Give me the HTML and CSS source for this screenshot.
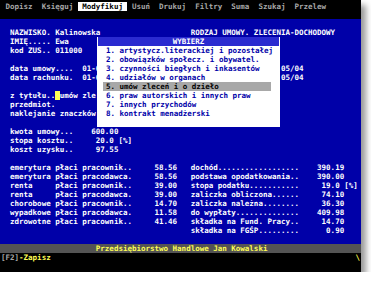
FILE: index.html
```html
<!DOCTYPE html>
<html lang="pl">
<head>
    <meta charset="UTF-8">
    <title>Umowy zlecenia</title>
    <link rel="stylesheet" href="styles.css">
</head>
<body>
    <div class="screen">
        <div class="menubar">
            <div class="row"> Dopisz  Księguj <span class="menu-active"> Modyfikuj </span> Usuń  Drukuj  Filtry  Suma  Szukaj  Przelew</div>
        </div>

        <div class="panel">
            <div class="row"></div>
            <div class="row">  NAZWISKO. Kalinowska                    RODZAJ UMOWY. ZLECENIA-DOCHODOWY</div>
            <div class="row">  IMIĘ..... Ewa</div>
            <div class="row">  kod ZUS.. 011000</div>
            <div class="row"></div>
            <div class="row"><span>  data umowy....  01-0</span><span class="month">05/04</span></div>
            <div class="row"><span>  data rachunku.  01-0</span><span class="month">05/04</span></div>
            <div class="row"></div>
            <div class="row">  z tytułu..<span class="cursor"> </span>umów zle</div>
            <div class="row">  przedmiot.</div>
            <div class="row">  naklejanie znaczków</div>
            <div class="row"></div>
            <div class="row">  kwota umowy...    600.00</div>
            <div class="row">  stopa kosztu..     20.0 [%]</div>
            <div class="row">  koszt uzysku..     97.55</div>
            <div class="row"></div>
            <div class="row">  emerytura płaci pracownik..     58.56   dochód..................    390.19</div>
            <div class="row">  emerytura płaci pracodawca.     58.56   podstawa opodatkowania..    390.00</div>
            <div class="row">  renta     płaci pracownik..     39.00   stopa podatku...........     19.0 [%]</div>
            <div class="row">  renta     płaci pracodawca.     39.00   zaliczka obliczona......     74.10</div>
            <div class="row">  chorobowe płaci pracownik..     14.70   zaliczka należna........     36.30</div>
            <div class="row">  wypadkowe płaci pracodawca.     11.58   do wypłaty..............    409.98</div>
            <div class="row">  zdrowotne płaci pracownik..     41.46   składka na Fund. Pracy..     14.70</div>
            <div class="row">                                          składka na FGŚP.........      0.90</div>
            <div class="row"></div>
        </div>

        <div class="status">
            <div class="row">                     Przedsiębiorstwo Handlowe Jan Kowalski</div>
        </div>

        <div class="keys">
            <div class="row"><span class="key">[F2]</span>-Zapisz<span class="spinner">\</span></div>
            <div class="row"></div>
        </div>

        <!-- okno wyboru rodzaju umowy -->
        <div class="picker">
            <div class="picker-title">WYBIERZ</div>
            <div class="picker-item">1. artystycz.literackiej i pozostałej</div>
            <div class="picker-item">2. obowiązków społecz. i obywatel.</div>
            <div class="picker-item">3. czynności biegłych i inkasentów</div>
            <div class="picker-item">4. udziałów w organach</div>
            <div class="picker-item selected">5. umów zleceń i o dzieło</div>
            <div class="picker-item">6. praw autorskich i innych praw</div>
            <div class="picker-item">7. innych przychodów</div>
            <div class="picker-item">8. kontrakt menadżerski</div>
        </div>
    </div>
</body>
</html>
```

FILE: styles.css
```css
body {
    margin: 0;
    background: #fff;
}
.screen {
    position: relative;
    width: 361px;
    height: 272px;
    background: #000;
    font-family: "DejaVu Sans Mono", monospace;
    font-size: 7.5px;
    font-weight: bold;
    box-shadow: 5px 5px 6px rgba(0, 0, 0, 0.4);
}
.row {
    height: 9.03px;
    line-height: 9.03px;
    white-space: pre;
    padding-left: 1px;
}
.menubar {
    height: 19.06px;
    padding-top: 1.5px;
    box-sizing: border-box;
    color: #a8a8a8;
}
.menu-active {
    background: #fff;
    color: #000;
}
.panel {
    background: #0000a8;
    color: #fff;
}
.month {
    margin-left: 40ch;
}
.cursor {
    background: #ffff54;
}
.status {
    background: #545454;
    color: #ffff54;
}
.keys {
    color: #ffff54;
}
.key {
    color: #a8a8a8;
}
.spinner {
    position: absolute;
    right: 1px;
}
.picker {
    position: absolute;
    left: 97px;
    top: 37.1px;
    width: 183px;
    height: 90.3px;
    background: #fff;
    color: #0000a8;
}
.picker-title {
    height: 9.03px;
    line-height: 9.03px;
    margin: 0 1px;
    background: #2a2ad0;
    color: #fff;
    text-align: center;
}
.picker-item {
    height: 9.03px;
    line-height: 9.03px;
    white-space: pre;
    margin: 0 9px 0 6px;
    padding-left: 3px;
}
.picker-item.selected {
    background: #a8a8a8;
    color: #000;
}
```
